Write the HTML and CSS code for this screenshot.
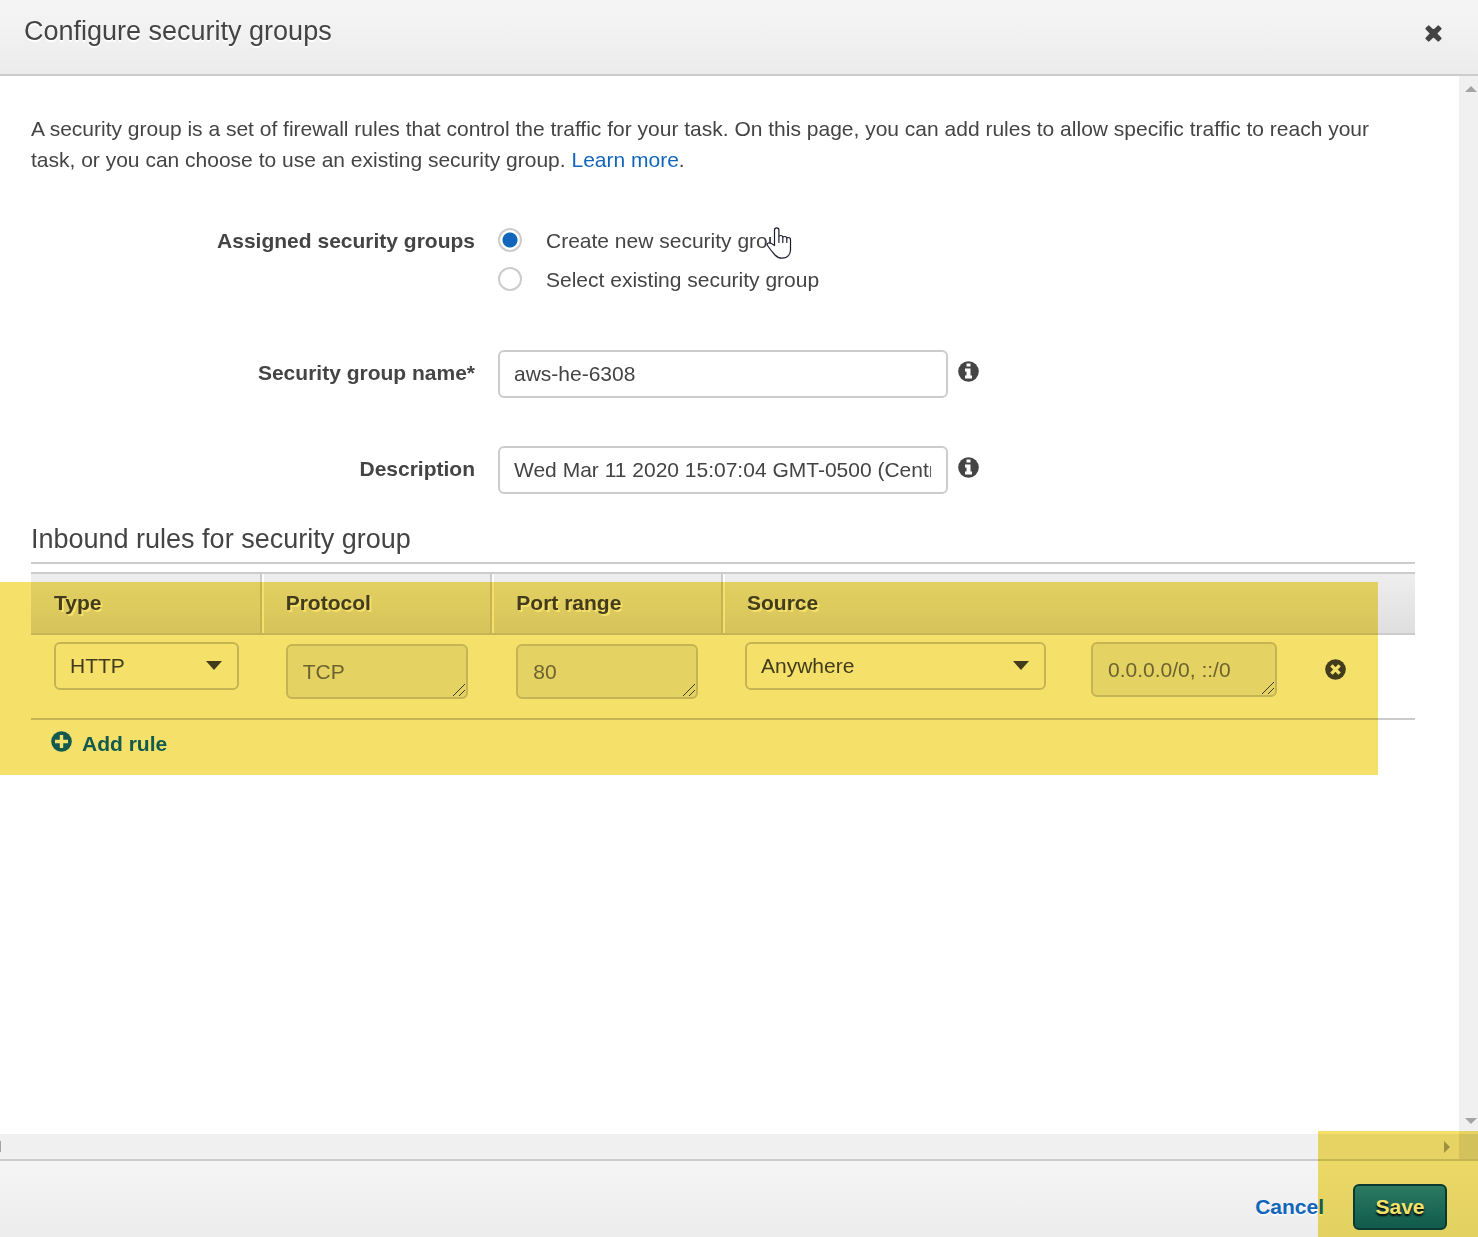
FILE: index.html
```html
<!DOCTYPE html>
<html lang="en">
<head>
<meta charset="utf-8">
<title>Configure security groups</title>
<link rel="stylesheet" href="styles.css">
</head>
<body>
<div class="dialog" role="dialog" aria-labelledby="dialog-title">
  <header class="dialog-header">
    <h1 id="dialog-title">Configure security groups</h1>
    <button class="icon-button" type="button" aria-label="Close">
      <svg width="17" height="17" viewBox="0 0 17 17"><path d="M3.600 1.200L8.500 5.700L13.400 1.200L15.800 3.600L11.300 8.500L15.800 13.400L13.400 15.800L8.500 11.300L3.600 15.800L1.200 13.400L5.700 8.500L1.200 3.600z" fill="#444" stroke="#444" stroke-width="1.600" stroke-linejoin="round"/></svg>
    </button>
  </header>

  <main class="viewport">
    <div class="content">
      <p class="intro">A security group is a set of firewall rules that control the traffic for your task. On this page, you can add rules to allow specific traffic to reach your task, or you can choose to use an existing security group. <a href="#">Learn more</a>.</p>

      <form class="form">
        <div class="form-row" role="radiogroup" aria-labelledby="assigned">
          <span class="form-label" id="assigned">Assigned security groups</span>
          <div class="radios">
            <label class="radio"><input type="radio" name="group" checked>Create new security group</label>
            <label class="radio"><input type="radio" name="group">Select existing security group</label>
            <svg class="pointer" width="26" height="34" viewBox="0 0 26 34"><path d="M8.500 19.500V4a2.200 2.200 0 0 1 4.400 0V10.500Q13 9.500 14.800 9.500Q16.800 9.500 16.800 11.500Q17 10.500 18.800 10.500Q20.800 10.500 20.800 12.500Q21 11.500 22.500 11.500Q24.500 11.500 24.500 14V24q0 3-2 5.500q-2 2.700-6.500 2.700q-4 0-7-3.200Q4.500 24 1.500 19.500Q0.500 17.500 2.500 17Q4.500 16.500 8.500 19.500z" fill="#fff"/><path d="M8.500 19.500V4a2.200 2.200 0 0 1 4.400 0V16.500V10.500Q13 9.500 14.800 9.500Q16.800 9.500 16.800 11.500V16.500V11.500Q17 10.500 18.800 10.500Q20.800 10.500 20.800 12.500V16.500V12.500Q21 11.500 22.500 11.500Q24.500 11.500 24.500 14V24q0 3-2 5.500q-2 2.700-6.500 2.700q-4 0-7-3.200Q4.500 24 1.500 19.500Q0.500 17.500 2.500 17Q4.500 16.500 8.500 19.500z" stroke="#1c1c30" stroke-width="1.200" stroke-linejoin="round"/></svg>
          </div>
        </div>
        <div class="form-row">
          <label class="form-label" for="name">Security group name*</label>
          <input class="field" id="name" type="text" value="aws-he-6308">
          <svg class="info" width="21" height="21" viewBox="0 0 21 21"><circle cx="10.500" cy="10.500" r="10.300" fill="#444"/><path d="M8.500 2.500h4v3h-4zM7 7.500h5.500v7H14v3H7v-3h1.500v-4H7z" fill="#fff"/></svg>
        </div>
        <div class="form-row">
          <label class="form-label" for="description">Description</label>
          <input class="field" id="description" type="text" value="Wed Mar 11 2020 15:07:04 GMT-0500 (Central Daylight Time)">
          <svg class="info" width="21" height="21" viewBox="0 0 21 21"><circle cx="10.500" cy="10.500" r="10.300" fill="#444"/><path d="M8.500 2.500h4v3h-4zM7 7.500h5.500v7H14v3H7v-3h1.500v-4H7z" fill="#fff"/></svg>
        </div>
      </form>

      <h2>Inbound rules for security group</h2>
      <section class="rules">
        <table>
          <thead>
            <tr><th>Type</th><th>Protocol</th><th>Port range</th><th class="wide">Source</th></tr>
          </thead>
          <tbody>
            <tr>
              <td><select class="type" aria-label="Type"><option>HTTP</option></select></td>
              <td><textarea class="readonly" rows="1" aria-label="Protocol" disabled>TCP</textarea></td>
              <td><textarea class="readonly" rows="1" aria-label="Port range" disabled>80</textarea></td>
              <td class="wide">
                <div class="source">
                  <select aria-label="Source"><option>Anywhere</option></select>
                  <textarea rows="1" aria-label="Source addresses" disabled>0.0.0.0/0, ::/0</textarea>
                  <button class="icon-button" type="button" aria-label="Remove rule">
                    <svg width="21" height="21" viewBox="0 0 21 21"><circle cx="10.500" cy="10.500" r="10.300" fill="#444"/><path d="M6.400 6.400l8.200 8.200M14.600 6.400l-8.200 8.200" stroke="#fff" stroke-width="3.400"/></svg>
                  </button>
                </div>
              </td>
            </tr>
          </tbody>
        </table>
        <button class="add-rule" type="button">
          <svg width="21" height="21" viewBox="0 0 21 21"><circle cx="10.500" cy="10.500" r="10.300" fill="#16b"/><path d="M10.500 4v13M4 10.500h13" stroke="#fff" stroke-width="3.400"/></svg>
          <span>Add rule</span>
        </button>
        <div class="mark mark-rules"></div>
      </section>
    </div>
    <div class="scroll-y"><span class="arrow up"></span><span class="arrow down"></span></div>
    <div class="scroll-x"><span class="stub"></span><span class="arrow right"></span></div>
    <div class="corner"></div>
  </main>

  <footer class="dialog-footer">
    <a class="cancel" href="#">Cancel</a>
    <button class="save" type="button">Save</button>
    <div class="mark mark-save"></div>
  </footer>
</div>
</body>
</html>
```
FILE: styles.css
```css
* { box-sizing: border-box; }

body {
  margin: 0;
  background: #fff;
  color: #444;
  font: 21px/31px "Liberation Sans", Arial, sans-serif;
}

a { color: #16b; text-decoration: none; }
svg { display: block; fill: none; flex: none; }
input, select, textarea, button { font: inherit; color: inherit; margin: 0; }

.dialog { display: flex; flex-direction: column; min-height: 100vh; }

.dialog-header {
  display: flex;
  justify-content: space-between;
  align-items: flex-start;
  padding: 15px 36px 0 24px;
  height: 76px;
  border-bottom: 2px solid #ccc;
  background: linear-gradient(#f5f5f5, #ececec);
}

h1, h2 { margin: 0; font-size: 27px; font-weight: 400; line-height: 32px; }
h1 { text-shadow: 0 2px 0 #fff; }

.icon-button { padding: 0; border: 0; background: none; }
.dialog-header .icon-button { padding-top: 10px; }

.viewport {
  flex: 1;
  display: grid;
  grid-template: 1fr 25px / minmax(0, 1fr) 19px;
}

.content { padding: 37px 44px 48px 31px; }
.intro { margin: 0; }

.form { display: grid; gap: 48px; padding-top: 43px; }
.form-row {
  display: grid;
  grid-template-columns: minmax(0, 444px) minmax(0, 450px) 21px;
  column-gap: 23px;
}
.form-label { padding-top: 7px; text-align: right; font-weight: 700; }
.radios { position: relative; display: grid; gap: 8px; padding: 7px 0; }
.radio { display: flex; align-items: flex-start; gap: 24px; white-space: nowrap; }
.radio input {
  appearance: none;
  width: 24px;
  height: 24px;
  margin-top: 3px;
  border: 2px solid #ccc;
  border-radius: 50%;
  background: #fff;
}
.radio input:checked { background: radial-gradient(circle, #16b 7px, #fff 8px); }
.pointer { position: absolute; left: 268px; top: 8px; }

.field, select, textarea {
  height: 48px;
  padding: 0 15px 0 14px;
  border: 2px solid #ccc;
  border-radius: 6px;
  background: #fff;
}
.info { margin: 11px 0 0 -13px; }

h2 { margin-top: 29px; padding-bottom: 7px; border-bottom: 2px solid #ccc; }

.rules { position: relative; padding-top: 8px; }
table { width: 100%; table-layout: fixed; border-collapse: separate; border-spacing: 0; }
th {
  height: 63px;
  padding: 0 0 2px 23px;
  border: solid #ccc;
  border-width: 2px 2px 2px 0;
  background: linear-gradient(#eee, #dfdfdf);
  text-align: left;
  text-shadow: 2px 2px 0 #fff;
}
th + th { padding-left: 24px; box-shadow: inset 2px 0 #fff; }
th.wide { border-right: 0; }
.wide { width: 50%; }
td { height: 85px; padding: 7px 0 0 23px; border-bottom: 2px solid #ccc; vertical-align: top; }
td + td { padding-left: 24px; }
td.wide { padding-left: 22px; }

select {
  appearance: none;
  display: block;
  padding-bottom: 2px;
  background: #fff url("data:image/svg+xml,%3Csvg xmlns='http://www.w3.org/2000/svg' width='16' height='9'%3E%3Cpath d='M0 0h16L8 9z' fill='%23444'/%3E%3C/svg%3E") right 15px top 17px no-repeat;
}
.type { width: 185px; }
textarea {
  display: block;
  height: 55px;
  padding: 10px 0 0 15px;
  overflow: hidden;
  resize: none;
  color: #707070;
  background: #eee url("data:image/svg+xml,%3Csvg xmlns='http://www.w3.org/2000/svg' width='12' height='12'%3E%3Cpath d='M0 12L12 0M6 12l6-6' stroke='%23444' fill='none'/%3E%3C/svg%3E") right 1px bottom 1px no-repeat;
}
.readonly { width: 182px; margin-top: 2px; }
.source { display: flex; }
.source select { width: 301px; margin-right: 45px; }
.source textarea { width: 186px; margin-right: 48px; }

.add-rule {
  display: flex;
  align-items: flex-start;
  gap: 10px;
  padding: 8px 20px;
  border: 0;
  background: none;
  color: #16b;
  font-weight: 700;
}
.add-rule svg { margin-top: 3px; }

/* Highlighter strokes laid over the dialog */
.mark { position: absolute; background: #f5e169; mix-blend-mode: multiply; pointer-events: none; }
.mark-rules { left: -31px; right: 37px; top: 18px; height: 193px; }
.mark-save { right: 0; bottom: 0; width: 160px; height: 106px; }

.scroll-y {
  display: flex;
  flex-direction: column;
  align-items: flex-end;
  justify-content: space-between;
  padding: 10px 1px;
  background: #f0f0f0;
}
.scroll-x {
  display: flex;
  align-items: center;
  justify-content: space-between;
  padding-right: 9px;
  background: #f0f0f0;
}
.corner { background: #dcdcdc; }
.arrow { border: 6px solid transparent; }
.arrow.up { border-top: 0; border-bottom-color: #a3a3a3; }
.arrow.down { border-bottom: 0; border-top-color: #a3a3a3; }
.arrow.right { border-right: 0; border-left-color: #a3a3a3; }
.stub { width: 1px; height: 11px; background: #a3a3a3; }

.dialog-footer {
  position: relative;
  display: flex;
  align-items: flex-start;
  justify-content: flex-end;
  gap: 29px;
  height: 78px;
  padding: 23px 31px 0 0;
  border-top: 2px solid #ccc;
  background: linear-gradient(#f5f5f5, #ececec);
}
.cancel { padding-top: 7px; font-weight: 700; text-shadow: 0 2px 0 #fff; }
.save {
  width: 94px;
  height: 46px;
  padding: 0 0 2px;
  border: 2px solid #0b4275;
  border-radius: 6px;
  background: linear-gradient(#2d8ae9, #16b);
  color: #fff;
  font-weight: 700;
  text-shadow: 0 2px 2px #000;
}
```
